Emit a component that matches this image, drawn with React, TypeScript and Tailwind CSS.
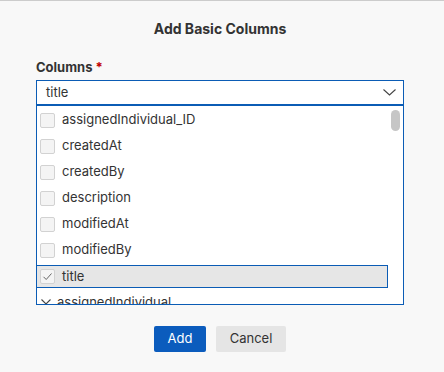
import React from "react";

const items = [
  "assignedIndividual_ID",
  "createdAt",
  "createdBy",
  "description",
  "modifiedAt",
  "modifiedBy",
];

function Box({ checked }: { checked?: boolean }) {
  return (
    <div className="w-[15px] h-[15px] rounded-[2px] border border-[#d2d2d2] bg-[#f4f4f4] flex items-center justify-center shrink-0">
      {checked && (
        <svg width="11" height="11" viewBox="0 0 11 11" fill="none">
          <path d="M1.5 5.8 L4.2 8.5 L9.5 2.5" stroke="#666" strokeWidth="1" />
        </svg>
      )}
    </div>
  );
}

export default function App() {
  return (
    <div
      className="w-[444px] h-[372px] bg-[#f8f8f8] border-t border-[#cccccc] text-[#333]"
      style={{ fontFamily: "Inter, 'Noto Sans', sans-serif" }}
    >
      <div className="w-[440px] flex flex-col">
        <div className="pt-[18px] text-center text-[14px] leading-[20px] font-bold">Add Basic Columns</div>
        <div className="mt-[20px] px-[36px]">
          <div className="text-[13px] leading-[16px] font-bold">
            Columns <span className="text-[#c00000]">*</span>
          </div>
          <div className="mt-[5px] h-[26px] bg-white border border-[#0b5cb5] border-b-2 flex items-center justify-between pl-[9px] pr-[7px] text-[13px]">
            <span>title</span>
            <svg width="13" height="7" viewBox="0 0 13 7" fill="none">
              <path d="M0.5 0.5 L6.5 6 L12.5 0.5" stroke="#444" strokeWidth="1.1" />
            </svg>
          </div>
          <div className="h-[199px] bg-white border border-t-0 border-[#0b5cb5] flex overflow-hidden relative">
            <div className="flex-1 pt-[1px] pr-[15px]">
              {items.map((t) => (
                <div key={t} className="h-[26px] flex items-center gap-[7px] pl-[3px] text-[13px]">
                  <Box />
                  <span>{t}</span>
                </div>
              ))}
              <div className="h-[26px] py-[2px] -ml-[1px]">
                <div className="h-[23px] flex items-center gap-[7px] pl-[3px] text-[13px] bg-[#e6e6e6] border border-[#0b5cb5]">
                  <Box checked />
                  <span>title</span>
                </div>
              </div>
              <div className="h-[26px] flex items-center gap-[6px] pl-[4px] text-[13px] leading-[16px]">
                <svg width="10" height="6" viewBox="0 0 10 6" fill="none">
                  <path d="M0.5 0.5 L5 5 L9.5 0.5" stroke="#444" strokeWidth="1.1" />
                </svg>
                <span>assignedIndividual</span>
              </div>
            </div>
            <div className="absolute right-[3px] top-[4px] w-[9px] h-[21px] rounded-full bg-[#c6c6c6]" />
          </div>
        </div>
        <div className="mt-[21px] flex justify-center gap-[10px] text-[13px]">
          <button className="w-[52px] h-[26px] rounded-[2px] bg-[#0b5cbd] text-white">Add</button>
          <button className="w-[70px] h-[26px] rounded-[2px] bg-[#e5e5e5] text-[#333]">Cancel</button>
        </div>
      </div>
    </div>
  );
}
